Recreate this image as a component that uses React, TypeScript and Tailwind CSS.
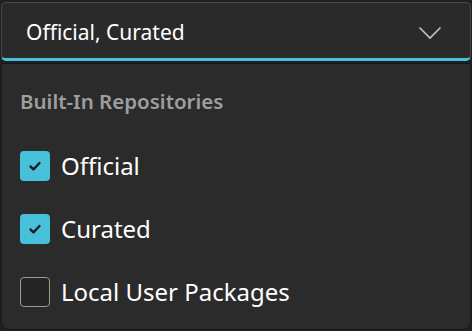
import React from 'react';

const items = [
  { label: 'Official', checked: true },
  { label: 'Curated', checked: true },
  { label: 'Local User Packages', checked: false },
];

const CheckBox = ({ checked }: { checked: boolean }) =>
  checked ? (
    <span className="flex h-[30px] w-[30px] items-center justify-center rounded-[4px] bg-[#47c1d9]">
      <svg width="14" height="12" viewBox="0 0 14 12" fill="none">
        <path d="M2.5 6.5 L5.5 9.3 L11.5 3" stroke="#1c1c1c" strokeWidth="2.4" strokeLinecap="round" strokeLinejoin="round" />
      </svg>
    </span>
  ) : (
    <span className="h-[30px] w-[30px] rounded-[4px] border border-[#9a9a9a] bg-[#252525]" />
  );

const App = () => {
  return (
    <div
      className="h-[331px] w-[472px] bg-[#1f1f1f] px-[1px] pt-[2px]"
      style={{ fontFamily: '"Noto Sans", "Open Sans", sans-serif' }}
    >
      <div className="flex h-[59px] items-center justify-between rounded-[5px] border border-[#474747] border-b-[3px] border-b-[#47c1d9] bg-[#2a2a2a] pl-6 pr-7 pt-[4px]">
        <span className="text-[21px] text-white">Official, Curated</span>
        <svg width="24" height="14" viewBox="0 0 24 14" fill="none">
          <path d="M1.5 1.5 L12 12 L22.5 1.5" stroke="#c4c4c4" strokeWidth="1.6" />
        </svg>
      </div>
      <div className="mt-[2px] h-[267px] rounded-b-[8px] border border-[#181818] bg-[#2b2b2b] pl-[18px] pt-[22px]">
        <div className="text-[20.5px] font-semibold text-[#9e9e9e]">Built-In Repositories</div>
        <div className="mt-[34px] flex flex-col gap-[33px]">
          {items.map((it) => (
            <div key={it.label} className="flex items-center gap-[11px]">
              <CheckBox checked={it.checked} />
              <span className="text-[24px] leading-none text-white">{it.label}</span>
            </div>
          ))}
        </div>
      </div>
    </div>
  );
};

export default App;
